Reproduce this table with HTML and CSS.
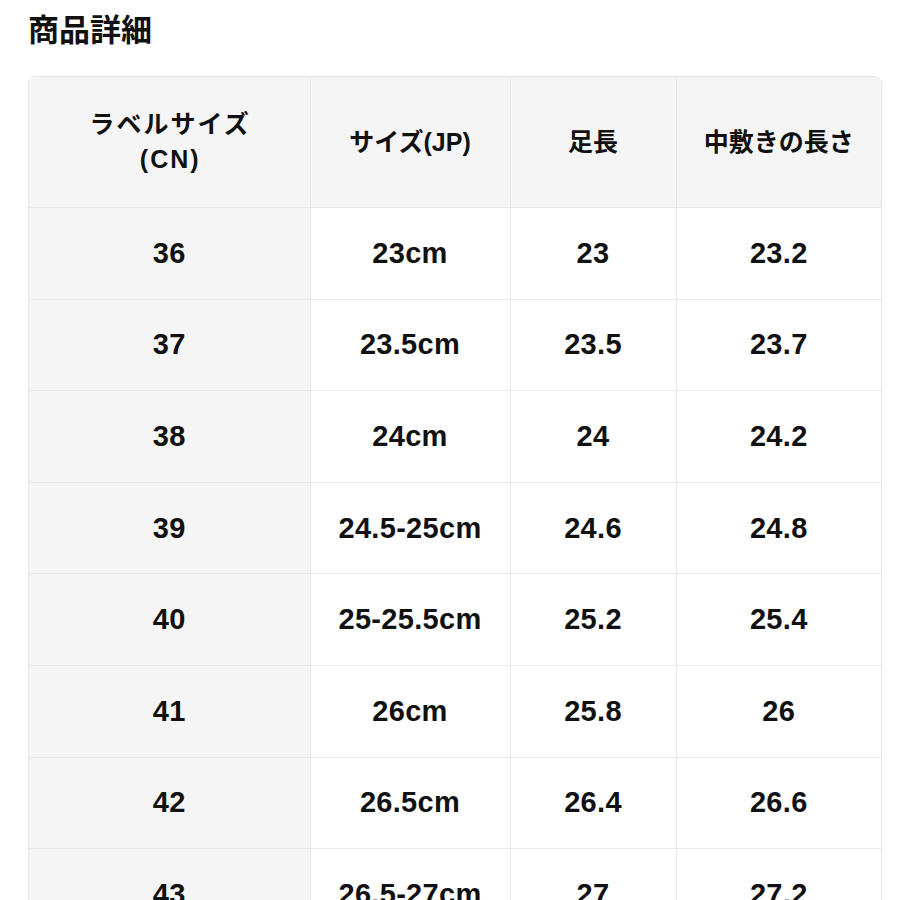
FILE: index.html
```html
<!DOCTYPE html>
<html lang="ja">
<head>
<meta charset="utf-8">
<link rel="stylesheet" href="styles.css">
</head>
<body>
<div class="page">
  <h1 class="title">商品詳細</h1>
  <div class="table-wrap">
    <table class="size-table">
      <colgroup>
        <col class="c1"><col class="c2"><col class="c3"><col class="c4">
      </colgroup>
      <thead>
        <tr>
          <th class="wide">ラベルサイズ<br>(CN)</th>
          <th>サイズ(JP)</th>
          <th>足長</th>
          <th>中敷きの長さ</th>
        </tr>
      </thead>
      <tbody>
        <tr><td>36</td><td>23cm</td><td>23</td><td>23.2</td></tr>
        <tr><td>37</td><td>23.5cm</td><td>23.5</td><td>23.7</td></tr>
        <tr><td>38</td><td>24cm</td><td>24</td><td>24.2</td></tr>
        <tr><td>39</td><td>24.5-25cm</td><td>24.6</td><td>24.8</td></tr>
        <tr><td>40</td><td>25-25.5cm</td><td>25.2</td><td>25.4</td></tr>
        <tr><td>41</td><td>26cm</td><td>25.8</td><td>26</td></tr>
        <tr><td>42</td><td>26.5cm</td><td>26.4</td><td>26.6</td></tr>
        <tr><td>43</td><td>26.5-27cm</td><td>27</td><td>27.2</td></tr>
      </tbody>
    </table>
  </div>
</div>
</body>
</html>
```
FILE: styles.css
```css
html, body {
  margin: 0;
  padding: 0;
  background: #ffffff;
}
body {
  font-family: "Liberation Sans", "Noto Sans CJK JP", sans-serif;
  color: #111111;
  overflow: hidden;
  height: 900px;
}
.page {
  padding: 0 18px 0 28px;
}
.title {
  margin: 0;
  padding-top: 8px;
  height: 76px;
  box-sizing: border-box;
  font-family: "Noto Sans CJK JP", sans-serif;
  font-size: 31px;
  line-height: 40px;
  font-weight: 700;
}
.table-wrap {
  border: 1px solid #e6e6e6;
  border-radius: 8px;
  overflow: hidden;
  width: 854px;
  box-sizing: border-box;
}
.size-table {
  width: 100%;
  border-collapse: collapse;
  table-layout: fixed;
}
.c1 { width: 281px; }
.c2 { width: 200px; }
.c3 { width: 166px; }
.c4 { width: auto; }
.size-table th,
.size-table td {
  text-align: center;
  vertical-align: middle;
  font-weight: 700;
  border-right: 1px solid #e9e9e9;
  border-bottom: 1px solid #e9e9e9;
  padding: 0;
}
.size-table th:last-child,
.size-table td:last-child {
  border-right: none;
}
.size-table th {
  background: #f5f5f5;
  height: 130px;
  font-size: 25px;
  line-height: 35px;
}
.size-table th.wide {
  letter-spacing: 2px;
  padding-left: 2px;
}
.size-table td {
  height: 90.6px;
  font-size: 29px;
  letter-spacing: 0.3px;
  background: #ffffff;
}
.size-table td:first-child {
  background: #f5f5f5;
}
```
